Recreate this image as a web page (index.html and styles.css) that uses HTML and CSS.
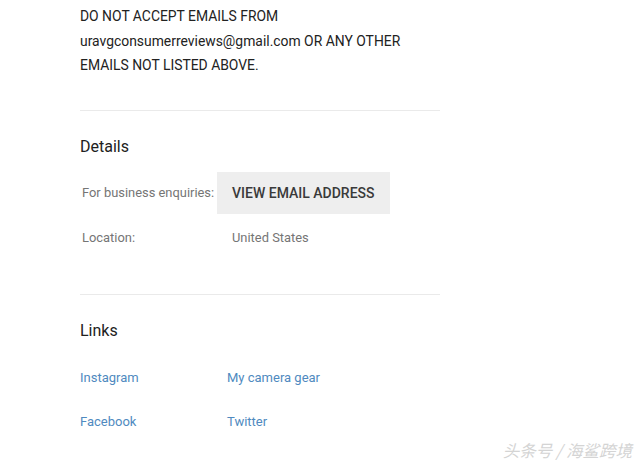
FILE: index.html
```html
<!DOCTYPE html>
<html lang="en">
<head>
  <meta charset="UTF-8" />
  <title>About</title>
  <link rel="stylesheet" href="styles.css">
</head>
<body>
  <div class="about">
    <p class="desc">DO NOT ACCEPT EMAILS FROM<br />uravgconsumerreviews@gmail.com OR ANY OTHER<br />EMAILS NOT LISTED ABOVE.</p>

    <hr class="sep" />

    <h2 class="title">Details</h2>
    <div class="details">
      <span class="label">For business enquiries:</span>
      <span><button type="button" class="view">VIEW EMAIL ADDRESS</button></span>
      <span class="label loc">Location:</span>
      <span class="value">United States</span>
    </div>

    <hr class="sep sep2" />

    <h2 class="title">Links</h2>
    <div class="links">
      <a href="#">Instagram</a>
      <a href="#">My camera gear</a>
      <a href="#">Facebook</a>
      <a href="#">Twitter</a>
    </div>
  </div>

  <div class="mark">头条号 / 海鲨跨境</div>
</body>
</html>
```

FILE: styles.css
```css
* {
  box-sizing: border-box;
}

body {
  margin: 0;
  background: #fff;
  font-family: Roboto, "Noto Sans", sans-serif;
  color: #212121;
}

.about {
  width: 440px;
  padding: 4px 0 0 80px;
}

.desc {
  margin: 0;
  font-size: 13.9px;
  line-height: 24.5px;
  color: #222;
}

.sep {
  border: none;
  border-top: 1px solid #eaeaea;
  margin: 32px 0 0;
}

.sep2 {
  margin-top: 46px;
}

.title {
  margin: 26px 0 0;
  font-size: 16px;
  font-weight: 400;
  line-height: 20px;
  color: #212121;
}

.details {
  display: grid;
  grid-template-columns: 137px auto;
  align-items: center;
  row-gap: 14px;
  margin-top: 15px;
  font-size: 12.9px;
  color: #757575;
}

.label {
  padding-left: 2px;
}

.loc {
  line-height: 20px;
}

.value {
  padding-left: 15px;
  line-height: 20px;
}

.view {
  height: 42px;
  padding: 0 15px;
  border: none;
  background: #eeeeee;
  font-family: inherit;
  font-size: 14px;
  font-weight: 500;
  color: #3a3a3a;
  cursor: pointer;
}

.links {
  display: grid;
  grid-template-columns: 147px auto;
  row-gap: 24px;
  margin-top: 27px;
  font-size: 13px;
  line-height: 20px;
}

.links a {
  color: #4f8ac0;
  text-decoration: none;
}

.mark {
  position: absolute;
  right: 8px;
  bottom: 4px;
  font-family: "Noto Sans CJK SC", sans-serif;
  font-size: 16.5px;
  color: #d4d4d4;
  font-style: italic;
}
```
